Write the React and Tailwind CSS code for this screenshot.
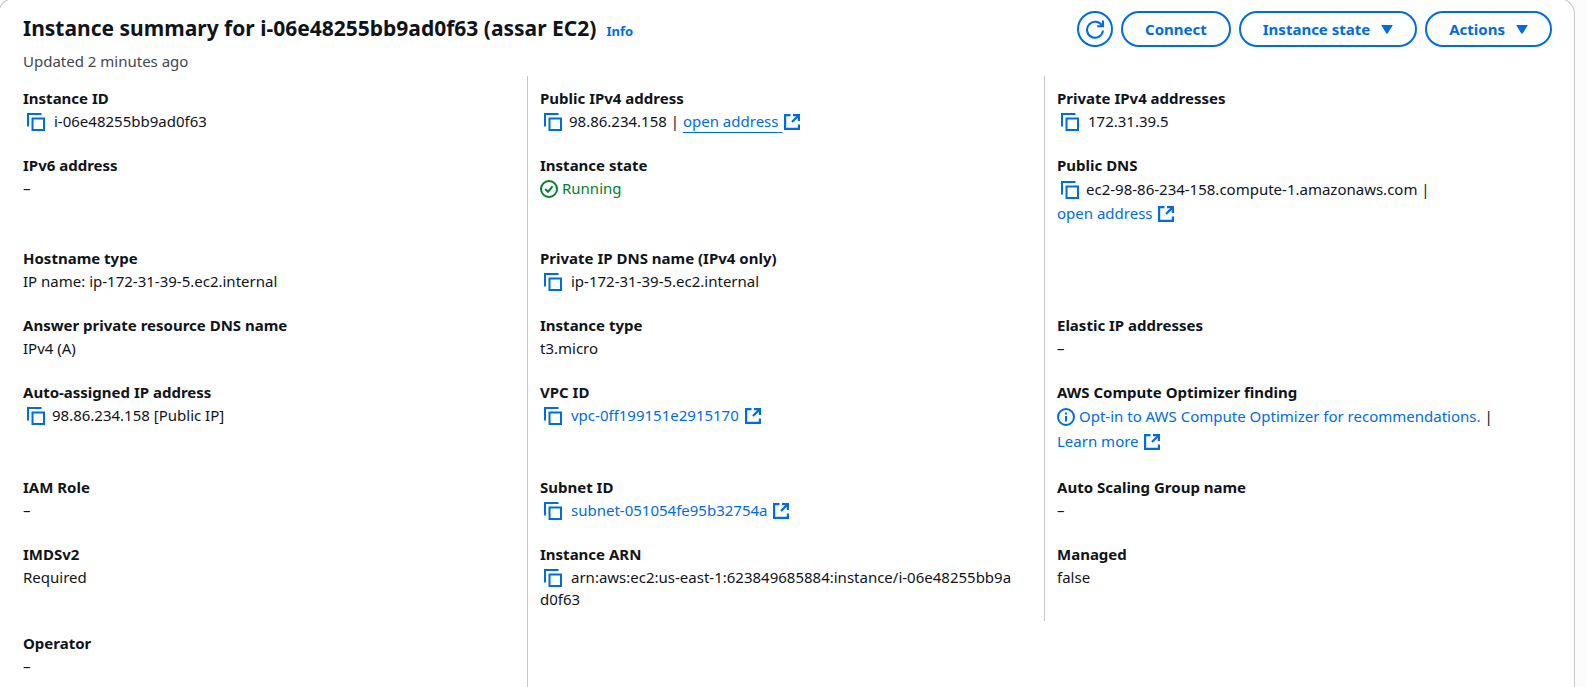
import React from 'react'

function CopyButton({ label, tight }) {
  return (
    <button
      type="button"
      aria-label={`Copy ${label}`}
      className={`ml-1 inline-block h-[18px] w-[18px] align-[-4px] text-[#006ce0] ${tight ? 'mr-[7px]' : 'mr-[9px]'}`}
    >
      <svg viewBox="0 0 18 18" className="block h-[18px] w-[18px]" fill="none" stroke="currentColor" strokeWidth="2">
        <path d="M1 13.5V1H14.5" />
        <rect x="5.5" y="5.5" width="11.5" height="11.5" />
      </svg>
    </button>
  )
}

function ExternalIcon() {
  return (
    <svg viewBox="0 0 16 16" className="ml-0.5 inline-block h-4 w-4 align-[-3px]" fill="none" stroke="currentColor" strokeWidth="2.2" aria-hidden="true">
      <path d="M6.5 1.1H1.1V14.9H14.9V10.5" />
      <path d="M9 1.1H14.9V7" />
      <path d="M14.6 1.4L8 8" />
    </svg>
  )
}

function ExternalLink({ children, underlined }) {
  return (
    <a href="#" className="inline-block text-[#006ce0]">
      <span className={underlined ? 'underline underline-offset-[5px]' : ''}>{children}&nbsp;</span>
      <ExternalIcon />
    </a>
  )
}

function RefreshIcon() {
  return (
    <svg viewBox="0 0 18 19" className="h-[19px] w-[18px]" fill="none" stroke="currentColor" strokeWidth="2" aria-hidden="true">
      <path d="M16.2 6.2A8 8 0 1 0 17 10.5" />
      <path d="M17 0.5V6.3H11.2" />
    </svg>
  )
}

function Caret() {
  return (
    <svg viewBox="0 0 13 10" className="h-[9px] w-[12px]" fill="currentColor" aria-hidden="true">
      <path d="M0.8 0H12.2Q13 0 12.6 0.9L7.2 9.4Q6.5 10.2 5.8 9.4L0.4 0.9Q0 0 0.8 0Z" />
    </svg>
  )
}

function CheckIcon() {
  return (
    <svg viewBox="0 0 18 18" className="mr-1 inline-block h-[18px] w-[18px] align-[-4px]" fill="none" stroke="currentColor" strokeWidth="2" aria-hidden="true">
      <circle cx="9" cy="9" r="8" />
      <path d="M5.2 9L8 11.7L12.6 6.4" />
    </svg>
  )
}

function InfoIcon() {
  return (
    <svg viewBox="0 0 18 18" className="mr-1 inline-block h-[18px] w-[18px] align-[-4px]" fill="none" stroke="currentColor" strokeWidth="2" aria-hidden="true">
      <circle cx="9" cy="9" r="8" />
      <path d="M9 8V13.5M9 4.6V6.6" />
    </svg>
  )
}

function ActionButton({ children, caret }) {
  return (
    <button
      type="button"
      className="flex h-9 items-center gap-[11px] rounded-full border-2 border-[#006ce0] px-[22px] font-bold text-[#006ce0]"
    >
      {children}
      {caret && <Caret />}
    </button>
  )
}

const copied = (text, tight) => (label) => (
  <>
    <CopyButton label={label} tight={tight} />
    {text}
  </>
)

const plain = (text) => () => text

const rows = [
  [
    ['Instance ID', copied('i-06e48255bb9ad0f63')],
    [
      'Public IPv4 address',
      (label) => (
        <>
          <CopyButton label={label} tight />
          98.86.234.158 | <ExternalLink underlined>open address</ExternalLink>
        </>
      ),
    ],
    ['Private IPv4 addresses', copied('172.31.39.5')],
  ],
  [
    ['IPv6 address', plain('–')],
    [
      'Instance state',
      () => (
        <span className="text-[#00802f]">
          <CheckIcon />
          Running
        </span>
      ),
    ],
    [
      'Public DNS',
      (label) => (
        <>
          <CopyButton label={label} tight />
          ec2-98-86-234-158.compute-1.amazonaws.com | <ExternalLink>open address</ExternalLink>
        </>
      ),
      'leading-6',
    ],
  ],
  [
    ['Hostname type', plain('IP name: ip-172-31-39-5.ec2.internal')],
    ['Private IP DNS name (IPv4 only)', copied('ip-172-31-39-5.ec2.internal')],
    null,
  ],
  [
    ['Answer private resource DNS name', plain('IPv4 (A)')],
    ['Instance type', plain('t3.micro')],
    ['Elastic IP addresses', plain('–')],
  ],
  [
    ['Auto-assigned IP address', copied('98.86.234.158 [Public IP]', true)],
    [
      'VPC ID',
      (label) => (
        <>
          <CopyButton label={label} />
          <ExternalLink>vpc-0ff199151e2915170</ExternalLink>
        </>
      ),
    ],
    [
      'AWS Compute Optimizer finding',
      () => (
        <>
          <a href="#" className="text-[#006ce0]">
            <InfoIcon />
            Opt-in to AWS Compute Optimizer for recommendations.
          </a>{' '}
          | <ExternalLink>Learn more</ExternalLink>
        </>
      ),
      'leading-[25px]',
    ],
  ],
  [
    ['IAM Role', plain('–')],
    [
      'Subnet ID',
      (label) => (
        <>
          <CopyButton label={label} />
          <ExternalLink>subnet-051054fe95b32754a</ExternalLink>
        </>
      ),
    ],
    ['Auto Scaling Group name', plain('–')],
  ],
  [
    ['IMDSv2', plain('Required')],
    [
      'Instance ARN',
      (label) => (
        <span className="break-all">
          <CopyButton label={label} />
          arn:aws:ec2:us-east-1:623849685884:instance/i-06e48255bb9ad0f63
        </span>
      ),
    ],
    ['Managed', plain('false')],
  ],
  [['Operator', plain('–')]],
]

function Cell({ item, column }) {
  const line = column < 2 ? 'border-r border-[#c6c6cd]' : ''
  if (!item) return <div className={line} />
  const [label, render, leading = 'leading-[22px]'] = item
  return (
    <div className={`pt-[11px] pr-7 pb-[11px] pl-3 ${line}`}>
      <dt className="leading-[22px] font-bold">{label}</dt>
      <dd className={`mt-px ${leading}`}>{render(label)}</dd>
    </div>
  )
}

export default function App() {
  return (
    <div className="flex min-h-screen bg-[#fcfcfd] font-['Noto_Sans',sans-serif] text-[15px] text-[#0f141a]">
      <main className="-mt-0.5 mr-3 -ml-0.5 flex-1 rounded-t-2xl border border-b-0 border-[#c6c6cd] bg-white">
        <header className="flex items-start justify-between pt-3 pr-[22px] pl-6">
          <div>
            <h1 className="text-[21px] leading-[34px] font-bold">
              Instance summary for i-06e48255bb9ad0f63 (assar EC2)
              <a href="#" className="ml-2.5 text-[13px] leading-none text-[#006ce0]">
                Info
              </a>
            </h1>
            <p className="mt-[5px] leading-[22px] text-[#424650]">Updated 2 minutes ago</p>
          </div>
          <div className="flex gap-2">
            <button
              type="button"
              aria-label="Refresh"
              className="flex h-9 w-9 items-center justify-center rounded-full border-2 border-[#006ce0] text-[#006ce0]"
            >
              <RefreshIcon />
            </button>
            <ActionButton>Connect</ActionButton>
            <ActionButton caret>Instance state</ActionButton>
            <ActionButton caret>Actions</ActionButton>
          </div>
        </header>
        <dl className="mx-3 mt-1 grid grid-cols-3">
          {rows.flatMap((row, r) =>
            row.map((item, c) => <Cell key={`${r}-${c}`} item={item} column={c} />),
          )}
        </dl>
      </main>
    </div>
  )
}
